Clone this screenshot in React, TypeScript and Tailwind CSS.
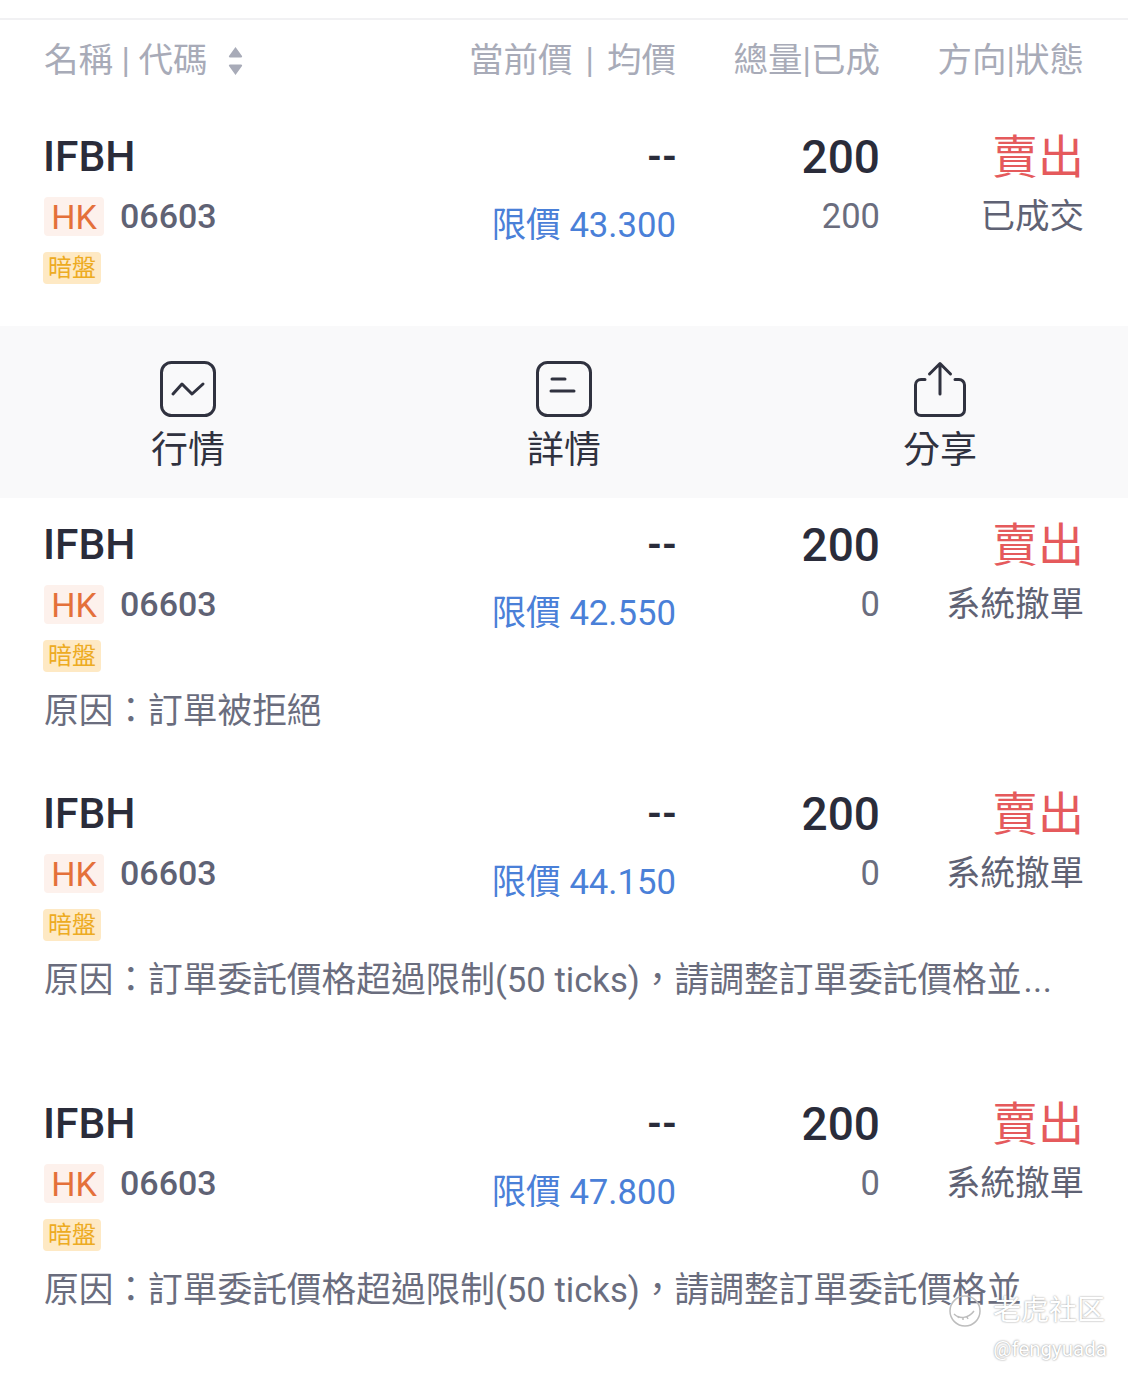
import React from 'react';

const orders = [
  { price: '43.300', filled: '200', status: '已成交', reason: '', more: false, pt: 'pt-[30px]', pb: 'pb-[42px]' },
  { price: '42.550', filled: '0', status: '系統撤單', reason: '原因：訂單被拒絕', more: false, pt: 'pt-[22px]', pb: 'pb-[58px]' },
  { price: '44.150', filled: '0', status: '系統撤單', reason: '原因：訂單委託價格超過限制(50 ticks)，請調整訂單委託價格並', more: true, pt: 'pt-0', pb: 'pb-[99px]' },
  { price: '47.800', filled: '0', status: '系統撤單', reason: '原因：訂單委託價格超過限制(50 ticks)，請調整訂單委託價格並', more: false, pt: 'pt-0', pb: 'pb-0' },
];

type Order = (typeof orders)[number];

const OrderRow: React.FC<{ order: Order }> = ({ order }) => (
  <div className={`px-[44px] ${order.pt} ${order.pb}`}>
    <div className="flex">
      <div className="flex-1">
        <div className="-ml-px h-[50px] text-[42.500px] leading-[50px] font-medium text-[#2a2c3a]">IFBH</div>
        <div className="mt-[15px] flex h-[39px] items-center">
          <span className="flex h-[39px] w-[60px] items-center justify-center rounded-[4px] bg-[#fdf1ec] text-[34px] leading-none text-[#e4703a]">HK</span>
          <span className="ml-[16px] pb-[2px] text-[34px] leading-none font-medium text-[#5f6274]">06603</span>
        </div>
        <div className="mt-[16px] -ml-px flex h-[32px] w-[58px] items-center justify-center rounded-[4px] bg-[#fee9c4] text-[24px] leading-none text-[#edab22]">暗盤</div>
      </div>
      <div className="w-[300px] text-right">
        <div className="-mr-px h-[50px] text-[38px] leading-[50px] font-bold text-[#2a2c3a]">--</div>
        <div className="mt-[23px] text-[34.700px] leading-[40px] text-[#4a80d8]">限價 {order.price}</div>
      </div>
      <div className="w-[204px] text-right">
        <div className="h-[50px] text-[46px] leading-[50px] font-medium text-[#2a2c3a]">200</div>
        <div className="mt-[14px] text-[34.500px] leading-[40px] text-[#6a6d7e]">{order.filled}</div>
      </div>
      <div className="w-[204px] text-right">
        <div className="h-[50px] text-[46px] leading-[50px] text-[#e55a5c]">賣出</div>
        <div className="mt-[14px] text-[34.500px] leading-[40px] text-[#5f6274]">{order.status}</div>
      </div>
    </div>
    {order.reason && (
      <div className="mt-[19px] h-[40px] text-[34.700px] leading-[40px] whitespace-nowrap text-[#6a6d7e]">
        {order.reason}
        {order.more && <span className="ml-[2px] tracking-[0.5px]">...</span>}
      </div>
    )}
  </div>
);

const ActionItem: React.FC<{ label: string; children: React.ReactNode }> = ({ label, children }) => (
  <div className="flex flex-col items-center pt-[35px]">
    <svg width="56" height="60" viewBox="0 0 56 60" fill="none" stroke="#30323f" strokeWidth="3" strokeLinecap="round" strokeLinejoin="round">
      {children}
    </svg>
    <div className="mt-[2px] text-[37px] leading-[56px] text-[#30323f]">{label}</div>
  </div>
);

const App: React.FC = () => {
  return (
    <div className="relative h-[1375px] w-[1128px] overflow-hidden bg-white font-['Roboto','Noto_Sans_CJK_TC',sans-serif]">
      {/* Header */}
      <div className="mt-[18px] flex h-[84px] items-center border-t-2 border-[#f1f1f3] px-[44px] text-[34.500px] text-[#a8abb8]">
        <div className="flex flex-1 items-center">
          <span>名稱 | 代碼</span>
          <svg className="ml-[20px]" width="15" height="30" viewBox="0 0 15 30" fill="#a8abb8">
            <path d="M7.5 1 14 10a1 1 0 0 1-1 1.500H2A1 1 0 0 1 1 10Z" />
            <path d="M7.5 29 14 20a1 1 0 0 0-1-1.500H2A1 1 0 0 0 1 20Z" />
          </svg>
        </div>
        <div className="w-[300px] text-right">
          當前價<span className="mx-[13px]">|</span>均價
        </div>
        <div className="w-[204px] text-right">總量|已成</div>
        <div className="w-[204px] text-right">方向|狀態</div>
      </div>

      <OrderRow order={orders[0]} />

      {/* Actions */}
      <div className="grid h-[172px] grid-cols-3 bg-[#f9f9fa]">
        <ActionItem label="行情">
          <rect x="1.500" y="1.500" width="53" height="53" rx="10" />
          <path d="M13 33 22 23 32 33 43 23" />
        </ActionItem>
        <ActionItem label="詳情">
          <rect x="1.500" y="1.500" width="53" height="53" rx="10" />
          <path d="M16 18h13M15 30h23" />
        </ActionItem>
        <ActionItem label="分享">
          <path d="M13 18.500H9a5.500 5.500 0 0 0-5.500 5.500v25a5.500 5.500 0 0 0 5.500 5.500h38a5.500 5.500 0 0 0 5.500-5.500V24a5.500 5.500 0 0 0-5.500-5.500h-4" />
          <path d="M28 33V3M17.500 13 28 2.500 38.500 13" />
        </ActionItem>
      </div>

      {orders.slice(1).map((order) => (
        <OrderRow key={order.price} order={order} />
      ))}

      {/* Watermark */}
      <div className="absolute top-[1294px] left-[948px] flex items-center text-white [text-shadow:0_0_2px_#8a8a8a]">
        <svg width="34" height="34" viewBox="0 0 34 34" fill="none" stroke="#bdbdbd" strokeWidth="1.500">
          <circle cx="17" cy="17" r="15" />
          <path d="M6 20c5 5 14 5 20-3M10 24l1-2M15 26l0-2M20 25l-1-2" />
        </svg>
        <span className="ml-[11px] text-[28px] leading-none">老虎社区</span>
      </div>
      <div className="absolute top-[1339px] right-[21px] text-[20.500px] leading-none text-white [text-shadow:0_0_2px_#7a7a7a]">@fengyuada</div>
    </div>
  );
};

export default App;
